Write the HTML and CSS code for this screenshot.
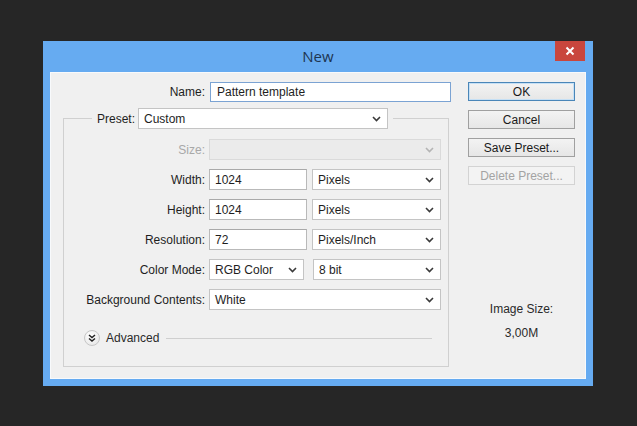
FILE: index.html
```html
<!DOCTYPE html>
<html>

<head>
  <meta charset="UTF-8">
  <title>New</title>
  <link rel="stylesheet" href="styles.css">
</head>

<body>
  <div class="window">
    <div class="titlebar">
      <span class="title">New</span>
      <div class="close">
        <svg width="10" height="10" viewBox="0 0 10 10">
          <path d="M1.5 1.5 L8.5 8.5 M8.5 1.5 L1.5 8.5" stroke="#fff" stroke-width="2" />
        </svg>
      </div>
    </div>

    <div class="client">
      <div class="main">
        <div class="name-row">
          <span class="label">Name:</span>
          <div class="field focus">Pattern template</div>
        </div>

        <fieldset class="group">
          <legend class="preset">
            <span class="label">Preset:</span>
            <div class="field select preset-select">
              <span>Custom</span>
              <svg class="chev" width="9" height="6" viewBox="0 0 9 6"><polyline points="1,1 4.5,4.5 8,1" /></svg>
            </div>
          </legend>

          <div class="row">
            <span class="label muted">Size:</span>
            <div class="field select disabled">
              <span></span>
              <svg class="chev" width="9" height="6" viewBox="0 0 9 6"><polyline points="1,1 4.5,4.5 8,1" /></svg>
            </div>
          </div>

          <div class="row">
            <span class="label">Width:</span>
            <div class="pair">
              <div class="field num">1024</div>
              <div class="field select unit">
                <span>Pixels</span>
                <svg class="chev" width="9" height="6" viewBox="0 0 9 6"><polyline points="1,1 4.5,4.5 8,1" /></svg>
              </div>
            </div>
          </div>

          <div class="row">
            <span class="label">Height:</span>
            <div class="pair">
              <div class="field num">1024</div>
              <div class="field select unit">
                <span>Pixels</span>
                <svg class="chev" width="9" height="6" viewBox="0 0 9 6"><polyline points="1,1 4.5,4.5 8,1" /></svg>
              </div>
            </div>
          </div>

          <div class="row">
            <span class="label">Resolution:</span>
            <div class="pair">
              <div class="field num">72</div>
              <div class="field select unit">
                <span>Pixels/Inch</span>
                <svg class="chev" width="9" height="6" viewBox="0 0 9 6"><polyline points="1,1 4.5,4.5 8,1" /></svg>
              </div>
            </div>
          </div>

          <div class="row">
            <span class="label">Color Mode:</span>
            <div class="pair mode">
              <div class="field select">
                <span>RGB Color</span>
                <svg class="chev" width="9" height="6" viewBox="0 0 9 6"><polyline points="1,1 4.5,4.5 8,1" /></svg>
              </div>
              <div class="field select">
                <span>8 bit</span>
                <svg class="chev" width="9" height="6" viewBox="0 0 9 6"><polyline points="1,1 4.5,4.5 8,1" /></svg>
              </div>
            </div>
          </div>

          <div class="row">
            <span class="label">Background Contents:</span>
            <div class="field select">
              <span>White</span>
              <svg class="chev" width="9" height="6" viewBox="0 0 9 6"><polyline points="1,1 4.5,4.5 8,1" /></svg>
            </div>
          </div>

          <div class="advanced">
            <span class="adv-icon">
              <svg width="8" height="8" viewBox="0 0 8 8">
                <polyline points="1,1 4,3.5 7,1" />
                <polyline points="1,4.5 4,7 7,4.5" />
              </svg>
            </span>
            <span>Advanced</span>
            <span class="rule"></span>
          </div>
        </fieldset>
      </div>

      <div class="side">
        <div class="btn default">OK</div>
        <div class="btn">Cancel</div>
        <div class="btn">Save Preset...</div>
        <div class="btn off">Delete Preset...</div>
        <div class="image-size">
          <div>Image Size:</div>
          <div class="size-value">3,00M</div>
        </div>
      </div>
    </div>
  </div>
</body>

</html>
```

FILE: styles.css
```css
* {
  box-sizing: border-box;
}

body {
  margin: 0;
  padding: 41px 0 0 43px;
  background: #262626;
  font-family: "Liberation Sans", Arial, sans-serif;
  font-size: 12px;
  color: #1e1e1e;
}

.window {
  width: 550px;
  background: #66abf1;
  padding: 0 7px 7px;
}

.titlebar {
  display: grid;
  grid-template-columns: 1fr auto 1fr;
  height: 31px;
}

.title {
  grid-column: 2;
  align-self: center;
  font-family: "Open Sans", "Noto Sans", sans-serif;
  font-size: 15px;
  color: #1d3550;
  margin-top: -1px;
}

.close {
  grid-column: 3;
  justify-self: end;
  align-self: start;
  width: 30px;
  height: 20px;
  margin-right: 1px;
  background: #c9463d;
  display: flex;
  align-items: center;
  justify-content: center;
}

.client {
  display: flex;
  height: 307px;
  background: #f0f0f0;
  border: 1px solid #f8fafc;
}

.main {
  width: 401px;
  padding-top: 9px;
}

.name-row {
  display: grid;
  grid-template-columns: 154px 241px;
  column-gap: 5px;
  align-items: center;
}

.label {
  text-align: right;
  white-space: nowrap;
}

.muted {
  color: #a8a8a8;
}

.field {
  height: 21px;
  background: #fff;
  border: 1px solid #b9b9b9;
  border-top-color: #a9a9a9;
  padding: 0 5px;
  display: flex;
  align-items: center;
  white-space: nowrap;
}

.name-row .field {
  height: 20px;
}

.focus {
  border-color: #7ba3d3;
  padding-left: 6px;
}

.select {
  justify-content: space-between;
  padding-right: 6px;
  border-color: #c4c4c4;
}

.chev {
  fill: none;
  stroke: #3a3a3a;
  stroke-width: 1.6;
  flex: none;
}

.select.disabled {
  background: #ebebeb;
  border-color: #dadada;
}

.select.disabled .chev {
  stroke: #b4b4b4;
}

.group {
  margin: 6px 0 0 12px;
  width: 386px;
  padding: 10px 7px 20px 0;
  border: 1px solid #d0d0d0;
  display: grid;
  row-gap: 9px;
}

.preset {
  display: flex;
  align-items: center;
  margin-left: 28px;
  padding: 0 5px;
}

.preset .label {
  margin-right: 3px;
}

.preset-select {
  width: 250px;
}

.row {
  display: grid;
  grid-template-columns: 141px 232px;
  column-gap: 4px;
  align-items: center;
}

.pair {
  display: grid;
  grid-template-columns: 98px 129px;
  column-gap: 5px;
}

.pair.mode {
  grid-template-columns: 95px 128px;
  column-gap: 9px;
}

.advanced {
  display: flex;
  align-items: center;
  margin: 11px 9px 0 20px;
  color: #2a2a2a;
}

.adv-icon {
  width: 16px;
  height: 16px;
  border-radius: 50%;
  border: 1px solid #c6c6c6;
  background: radial-gradient(circle at 40% 35%, #ffffff, #e2e2e2);
  display: flex;
  align-items: center;
  justify-content: center;
  margin-right: 6px;
}

.adv-icon polyline {
  fill: none;
  stroke: #222;
  stroke-width: 1.5;
}

.rule {
  flex: 1;
  height: 1px;
  background: #cfcfcf;
  margin-left: 7px;
}

.side {
  width: 107px;
  margin-left: 16px;
  padding-top: 9px;
  display: flex;
  flex-direction: column;
  gap: 9px;
}

.btn {
  height: 19px;
  border: 1px solid #a0a0a0;
  background: linear-gradient(#f3f3f3, #e6e6e6);
  display: flex;
  align-items: center;
  justify-content: center;
  color: #1a1a1a;
}

.btn.default {
  border-color: #4a86b8;
  box-shadow: inset 0 0 0 1px #c6e0f5;
}

.btn.off {
  color: #a3a3a3;
  border-color: #d3d3d3;
  background: #f3f3f3;
}

.image-size {
  margin-top: 108px;
  text-align: center;
  color: #2a2a2a;
}

.size-value {
  margin-top: 10px;
}
```
